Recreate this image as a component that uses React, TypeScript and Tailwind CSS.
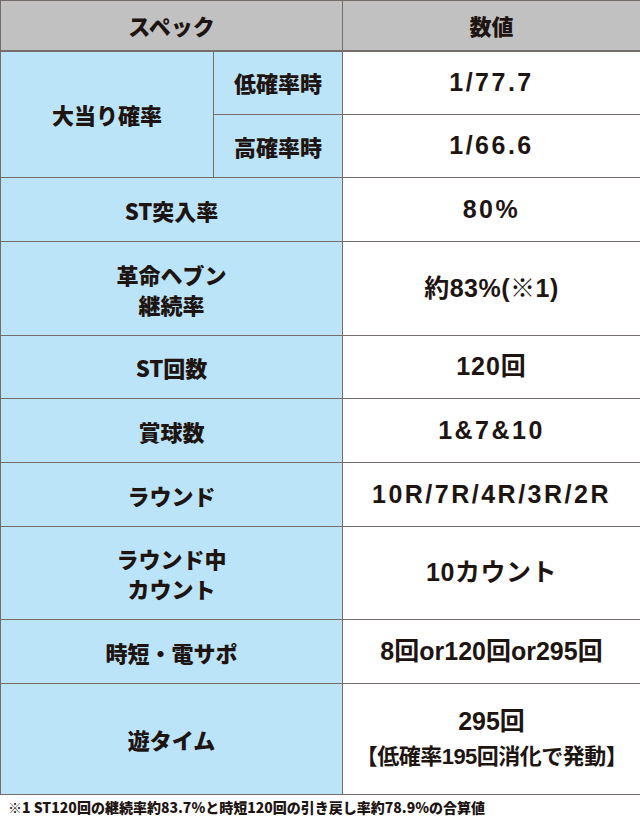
const jp = { fontFamily: '"Noto Sans CJK JP", sans-serif' };
const num = { fontFamily: '"Liberation Sans", "Noto Sans CJK JP", sans-serif' };

const line = "border border-[#756d69]";

type Row = { label: string[]; value: string[]; h: string; track?: string };

const rows: Row[] = [
  { label: ["ST突入率"], value: ["80%"], h: "h-[64px]" },
  { label: ["革命ヘブン", "継続率"], value: ["約83%(※1)"], h: "h-[94px]", track: "tracking-[0.5px]" },
  { label: ["ST回数"], value: ["120回"], h: "h-[63px]", track: "tracking-[1px]" },
  { label: ["賞球数"], value: ["1&7&10"], h: "h-[64px]" },
  { label: ["ラウンド"], value: ["10R/7R/4R/3R/2R"], h: "h-[64px]" },
  { label: ["ラウンド中", "カウント"], value: ["10カウント"], h: "h-[93px]", track: "tracking-[0.5px]" },
  { label: ["時短・電サポ"], value: ["8回or120回or295回"], h: "h-[64px]", track: "tracking-normal" },
];

function Lines({ items }: { items: string[] }) {
  return (
    <>
      {items.map((t, i) => (
        <div key={i}>{t}</div>
      ))}
    </>
  );
}

export default function App() {
  return (
    <div className="w-[640px] bg-white text-[#1e1512]">
      <table className="w-[640px] table-fixed border-collapse">
        <colgroup>
          <col className="w-[213px]" />
          <col className="w-[129px]" />
          <col className="w-[298px]" />
        </colgroup>
        <tbody>
          <tr className="h-[50px] bg-[#c1c1c1]">
            <th colSpan={2} className={`${line} border-b-2 text-[22px] font-black`} style={jp}>
              スペック
            </th>
            <th className={`${line} border-b-2 text-[22px] font-black`} style={jp}>
              数値
            </th>
          </tr>
          <tr className="h-[64px]">
            <td rowSpan={2} className={`${line} bg-[#bce4f8] text-center text-[22px] font-black`} style={jp}>
              大当り確率
            </td>
            <td className={`${line} bg-[#bce4f8] text-center text-[22px] font-black`} style={jp}>
              低確率時
            </td>
            <td className={`${line} text-center text-[25px] font-bold tracking-[2.5px]`} style={num}>
              1/77.7
            </td>
          </tr>
          <tr className="h-[63px]">
            <td className={`${line} bg-[#bce4f8] text-center text-[22px] font-black`} style={jp}>
              高確率時
            </td>
            <td className={`${line} text-center text-[25px] font-bold tracking-[2.5px]`} style={num}>
              1/66.6
            </td>
          </tr>
          {rows.map((r) => (
            <tr key={r.label.join("")} className={r.h}>
              <td
                colSpan={2}
                className={`${line} bg-[#bce4f8] text-center text-[22px] font-black leading-[30px]`}
                style={jp}
              >
                <Lines items={r.label} />
              </td>
              <td
                className={`${line} text-center text-[25px] font-bold ${r.track ?? "tracking-[2.5px]"}`}
                style={num}
              >
                <Lines items={r.value} />
              </td>
            </tr>
          ))}
          <tr className="h-[111px]">
            <td colSpan={2} className={`${line} bg-[#bce4f8] text-center text-[22px] font-black`} style={jp}>
              遊タイム
            </td>
            <td className={`${line} text-center font-bold leading-[35px]`} style={num}>
              <div className="text-[25px]">295回</div>
              <div className="text-[22px] tracking-[-0.5px]">【低確率195回消化で発動】</div>
            </td>
          </tr>
        </tbody>
      </table>
      <p className="pl-[8px] pt-[3px] text-[14px] font-black leading-[18px]" style={jp}>
        ※1 ST120回の継続率約83.7%と時短120回の引き戻し率約78.9%の合算値
      </p>
    </div>
  );
}
